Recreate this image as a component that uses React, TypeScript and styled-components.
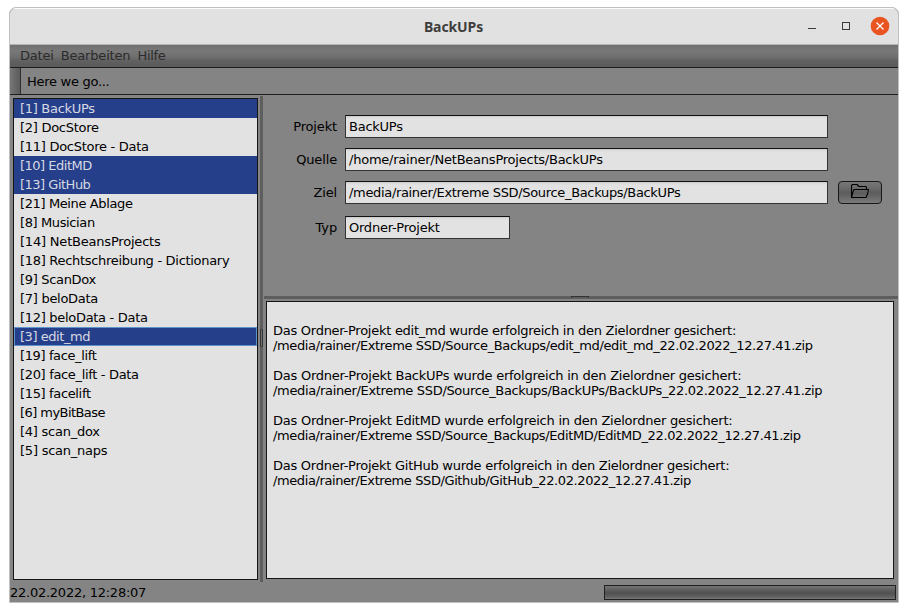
import React from 'react';
import styled, { createGlobalStyle } from 'styled-components';

const Global = createGlobalStyle`
  * { box-sizing: border-box; }
  html, body { margin: 0; background: #fff; }
  body { font: 13px/15px "DejaVu Sans", sans-serif; color: #000; overflow: hidden; }
  #root { width: 908px; height: 612px; padding: 7px 9px 9px; white-space: pre; }
`;

const Window = styled.div`
  width: 890px;
  height: 596px;
  border: 1px solid #c0c0c0;
  border-radius: 7px 7px 0 0;
  background: #848484;
  overflow: hidden;
  display: flex;
  flex-direction: column;
`;

const TitleBar = styled.header`
  height: 37px;
  flex: none;
  background: #e1e1e1;
  border-top: 1px solid #fbfbfb;
  border-bottom: 1px solid #b4b4b4;
  display: grid;
  grid-template-columns: 1fr 100px 1fr;
  align-items: center;
`;

const Title = styled.h1`
  grid-column: 2;
  margin: 0;
  text-align: center;
  font: bold 14px/20px "Noto Sans", sans-serif;
  letter-spacing: -0.1px;
  padding-right: 1px;
  color: #3d3d3d;
`;

const Controls = styled.div`
  justify-self: end;
  display: flex;
  align-items: center;
  padding: 0 8px 2px 0;
  svg { display: block; }
`;

const Text = styled.span<{ $track: number }>`
  letter-spacing: ${p => p.$track}px;
`;

const MenuBar = styled.nav`
  height: 23px;
  flex: none;
  display: flex;
  gap: 7px;
  padding: 3px 0 0 10px;
  color: #2b2b2b;
  background: linear-gradient(#707070 0%, #787878 25%, #707070 52%, #606060 72%, #5a5a5a 100%);
  border-bottom: 1px solid #1c1c1c;
`;

const ToolBar = styled.div`
  height: 27px;
  flex: none;
  display: flex;
  border-bottom: 1px solid #1c1c1c;
`;

const Grip = styled.div`
  width: 11px;
  border-right: 1px solid #303030;
  border-radius: 3px 0 0 3px;
  background: linear-gradient(90deg, #777, #5b5b5b);
`;

const ToolText = styled.span`
  padding: 6px 0 0 6px;
  letter-spacing: -0.28px;
`;

const Split = styled.main`
  height: 487px;
  flex: none;
  display: flex;
  padding-top: 1px;
`;

const List = styled.ul`
  width: 245px;
  height: 482px;
  margin: 2px 2px 0 3px;
  padding: 0;
  list-style: none;
  flex: none;
  background: #e2e2e2;
  border: 1px solid #161616;
`;

const Item = styled.li<{ $selected: boolean; $focused: boolean; $track: number }>`
  height: 19px;
  padding: ${p => (p.$focused ? '1px 0 0 5px' : '2px 0 0 6px')};
  letter-spacing: ${p => p.$track}px;
  color: ${p => (p.$selected ? '#d6d9e2' : '#000')};
  background: ${p => (p.$selected ? '#263f8a' : 'transparent')};
  border: ${p => (p.$focused ? '1px solid #6093c9' : '0')};
`;

const VerticalDivider = styled.div`
  width: 3px;
  flex: none;
  background: #5e5e5e;
  display: flex;
  align-items: center;
`;

const VerticalHandle = styled.div`
  width: 3px;
  height: 18px;
  margin-bottom: 2px;
  border: 1px solid #343434;
  border-radius: 1px;
  background: #707070;
`;

const Right = styled.section`
  flex: 1;
  margin-left: 1px;
  display: flex;
  flex-direction: column;
`;

const Form = styled.div`
  height: 200px;
  flex: none;
  padding-top: 19px;
`;

const Row = styled.div<{ $gap: number }>`
  height: 23px;
  display: flex;
  align-items: center;
  margin-bottom: ${p => p.$gap}px;
`;

const Label = styled.label`
  width: 73px;
  margin-right: 8px;
  text-align: right;
  letter-spacing: -0.15px;
`;

const Field = styled.div<{ $width: number; $track: number }>`
  width: ${p => p.$width}px;
  height: 23px;
  padding: 3px 0 0 3px;
  letter-spacing: ${p => p.$track}px;
  background: linear-gradient(#c6c6c6 0, #d8d8d8 1px, #e2e2e2 3px);
  border: 1px solid #333;
  border-top-color: #111;
`;

const Browse = styled.button`
  width: 44px;
  height: 23px;
  margin: 0 0 0 10px;
  padding: 2px 0 0;
  display: flex;
  justify-content: center;
  align-items: flex-start;
  border: 1px solid #171717;
  border-radius: 4px;
  background: linear-gradient(#767676, #6d6d6d 25%, #5c5c5c 52%, #7a7a7a);
  svg { display: block; }
`;

const HorizontalDivider = styled.div`
  height: 3px;
  flex: none;
  background: #5e5e5e;
  display: flex;
  justify-content: center;
`;

const HorizontalHandle = styled.div`
  width: 18px;
  height: 2px;
  margin-right: 2px;
  border: 1px solid #343434;
  border-bottom: 0;
`;

const Log = styled.div`
  width: 628px;
  height: 278px;
  margin: 2px 0 0 2px;
  padding: 6px;
  background: #e2e2e2;
  border: 1px solid #161616;
`;

const Paragraph = styled.p`
  margin: 15px 0 0;
`;

const StatusBar = styled.footer`
  flex: 1;
  display: flex;
  justify-content: space-between;
  padding: 3px 2px 0 0;
`;

const Clock = styled.span`
  letter-spacing: -0.25px;
`;

const Progress = styled.div`
  width: 292px;
  height: 15px;
  background: linear-gradient(#757575 0, #646464 3px, #505050 7px, #626262 11px, #777);
  border: 1px solid #202020;
`;

const items: { name: string; track: number; selected?: boolean; focused?: boolean }[] = [
  { name: '[1] BackUPs', track: -0.3, selected: true },
  { name: '[2] DocStore', track: -0.28 },
  { name: '[11] DocStore - Data', track: -0.28 },
  { name: '[10] EditMD', track: -0.5, selected: true },
  { name: '[13] GitHub', track: -0.5, selected: true },
  { name: '[21] Meine Ablage', track: -0.38 },
  { name: '[8] Musician', track: -0.38 },
  { name: '[14] NetBeansProjects', track: -0.2 },
  { name: '[18] Rechtschreibung - Dictionary', track: -0.3 },
  { name: '[9] ScanDox', track: -0.32 },
  { name: '[7] beloData', track: -0.28 },
  { name: '[12] beloData - Data', track: -0.3 },
  { name: '[3] edit_md', track: -0.45, selected: true, focused: true },
  { name: '[19] face_lift', track: -0.38 },
  { name: '[20] face_lift - Data', track: -0.33 },
  { name: '[15] facelift', track: -0.35 },
  { name: '[6] myBitBase', track: -0.56 },
  { name: '[4] scan_dox', track: -0.25 },
  { name: '[5] scan_naps', track: -0.23 },
];

const fields = [
  { label: 'Projekt', value: 'BackUPs', width: 483, gap: 10, track: -0.25 },
  { label: 'Quelle', value: '/home/rainer/NetBeansProjects/BackUPs', width: 483, gap: 10, track: -0.23 },
  { label: 'Ziel', value: '/media/rainer/Extreme SSD/Source_Backups/BackUPs', width: 483, gap: 12, track: -0.33, browse: true },
  { label: 'Typ', value: 'Ordner-Projekt', width: 165, gap: 0, track: -0.24 },
];

const log = [
  { name: 'edit_md', track: -0.265, path: '/media/rainer/Extreme SSD/Source_Backups/edit_md/edit_md_22.02.2022_12.27.41.zip', pathTrack: -0.37 },
  { name: 'BackUPs', track: -0.235, path: '/media/rainer/Extreme SSD/Source_Backups/BackUPs/BackUPs_22.02.2022_12.27.41.zip', pathTrack: -0.325 },
  { name: 'EditMD', track: -0.235, path: '/media/rainer/Extreme SSD/Source_Backups/EditMD/EditMD_22.02.2022_12.27.41.zip', pathTrack: -0.38 },
  { name: 'GitHub', track: -0.26, path: '/media/rainer/Extreme SSD/Github/GitHub_22.02.2022_12.27.41.zip', pathTrack: -0.4 },
];

const WindowIcons = () => (
  <svg width="82" height="20" viewBox="0 0 82 20">
    <path d="M0 12.5h8" stroke="#3d3d3d" />
    <rect x="34.5" y="6.5" width="7" height="7" fill="none" stroke="#3d3d3d" />
    <circle cx="72" cy="10" r="9.3" fill="#e95420" />
    <path d="M68.5 6.5l7 7m0-7l-7 7" stroke="#fff" strokeWidth="1.3" />
  </svg>
);

const FolderIcon = () => (
  <svg width="20" height="15" viewBox="0 0 20 15" fill="none" stroke="#000" strokeWidth="1.1" strokeLinejoin="round">
    <path d="M1.500 13.500h14.500l1.500-3.500 1-4.500H5L3.500 6 1.500 13.500V1.500L2.500.5h4.500l2 2h7l.5 1v2" />
  </svg>
);

export default function App() {
  return (
    <>
      <Global />
      <Window>
        <TitleBar>
          <Title>BackUPs</Title>
          <Controls><WindowIcons /></Controls>
        </TitleBar>
        <MenuBar>
          <Text $track={-0.2}>Datei</Text>
          <Text $track={-0.17}>Bearbeiten</Text>
          <Text $track={-0.3}>Hilfe</Text>
        </MenuBar>
        <ToolBar>
          <Grip />
          <ToolText>Here we go...</ToolText>
        </ToolBar>
        <Split>
          <List>
            {items.map(item => (
              <Item key={item.name} $selected={!!item.selected} $focused={!!item.focused} $track={item.track}>
                {item.name}
              </Item>
            ))}
          </List>
          <VerticalDivider><VerticalHandle /></VerticalDivider>
          <Right>
            <Form>
              {fields.map(f => (
                <Row key={f.label} $gap={f.gap}>
                  <Label>{f.label}</Label>
                  <Field $width={f.width} $track={f.track}>{f.value}</Field>
                  {f.browse && <Browse><FolderIcon /></Browse>}
                </Row>
              ))}
            </Form>
            <HorizontalDivider><HorizontalHandle /></HorizontalDivider>
            <Log>
              {log.map(entry => (
                <Paragraph key={entry.name}>
                  <Text $track={entry.track}>
                    Das Ordner-Projekt {entry.name} wurde erfolgreich in den Zielordner gesichert:
                  </Text>
                  {'\n'}
                  <Text $track={entry.pathTrack}>{entry.path}</Text>
                </Paragraph>
              ))}
            </Log>
          </Right>
        </Split>
        <StatusBar>
          <Clock>22.02.2022, 12:28:07</Clock>
          <Progress />
        </StatusBar>
      </Window>
    </>
  );
}
